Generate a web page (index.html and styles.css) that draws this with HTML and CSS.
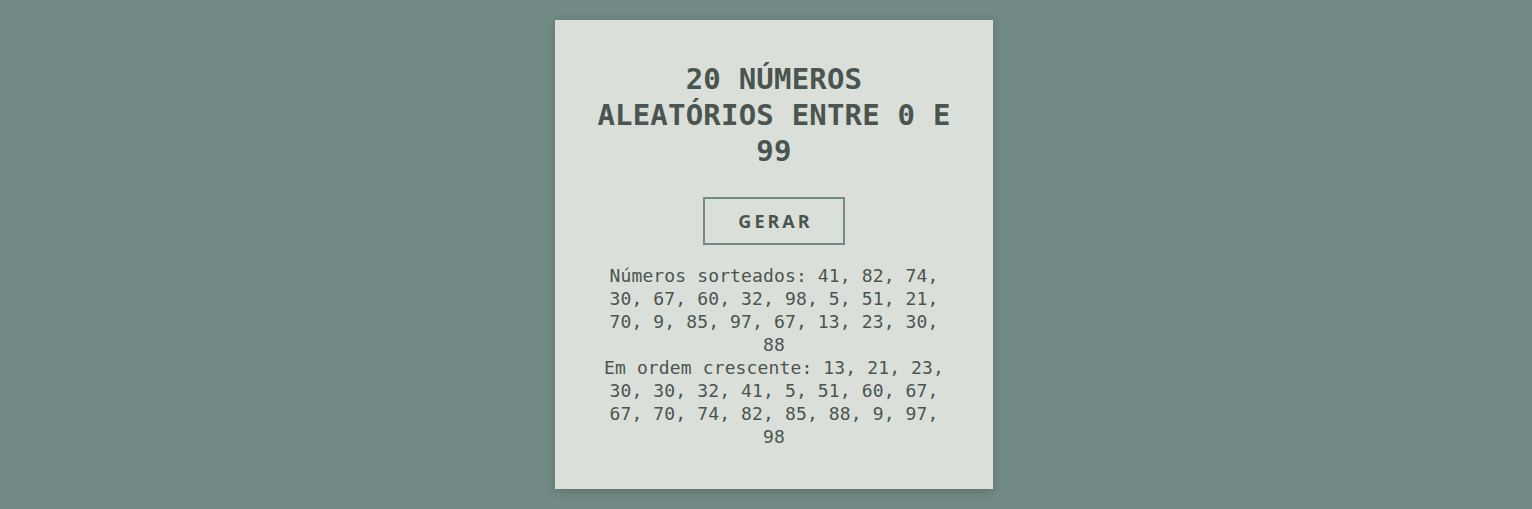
FILE: index.html
```html
<!DOCTYPE html>
<html lang="pt-BR">
<head>
<meta charset="utf-8">
<title>Números aleatórios</title>
<link rel="stylesheet" href="styles.css">
</head>
<body>
<main class="card">
  <h1 class="title">20 NÚMEROS ALEATÓRIOS ENTRE 0 E 99</h1>
  <button class="btn" type="button">GERAR</button>
  <div class="result">
    <p>Números sorteados: 41, 82, 74, 30, 67, 60, 32, 98, 5, 51, 21, 70, 9, 85, 97, 67, 13, 23, 30, 88</p>
    <p>Em ordem crescente: 13, 21, 23, 30, 30, 32, 41, 5, 51, 60, 67, 67, 70, 74, 82, 85, 88, 9, 97, 98</p>
  </div>
</main>
</body>
</html>
```

FILE: styles.css
```css
html, body {
  margin: 0;
  padding: 0;
}
body {
  background: #738b86;
  min-height: 509px;
  display: flex;
  justify-content: center;
  align-items: flex-start;
  padding: 20px 0 0 16px;
  box-sizing: border-box;
  font-family: "DejaVu Sans Mono", monospace;
  color: #4a5550;
}
.card {
  width: 438px;
  box-sizing: border-box;
  padding: 41px 40px 41px;
  background: #dadfd9;
  box-shadow: 0 2px 10px rgba(40, 60, 55, 0.35);
  display: flex;
  flex-direction: column;
  align-items: center;
  text-align: center;
}
.title {
  margin: 0;
  font-size: 29px;
  line-height: 36px;
  font-weight: bold;
  letter-spacing: 0.2px;
  color: #4a5550;
}
.btn {
  margin-top: 28px;
  width: 142px;
  height: 48px;
  background: transparent;
  border: 2px solid #738b86;
  font-family: "Open Sans", sans-serif;
  font-weight: bold;
  font-size: 18px;
  letter-spacing: 3px;
  color: #4a5550;
  padding: 0 0 0 3px;
  cursor: pointer;
}
.result {
  margin-top: 19px;
  font-size: 18px;
  line-height: 23px;
  letter-spacing: 0.13px;
}
.result p {
  margin: 0;
}
```
